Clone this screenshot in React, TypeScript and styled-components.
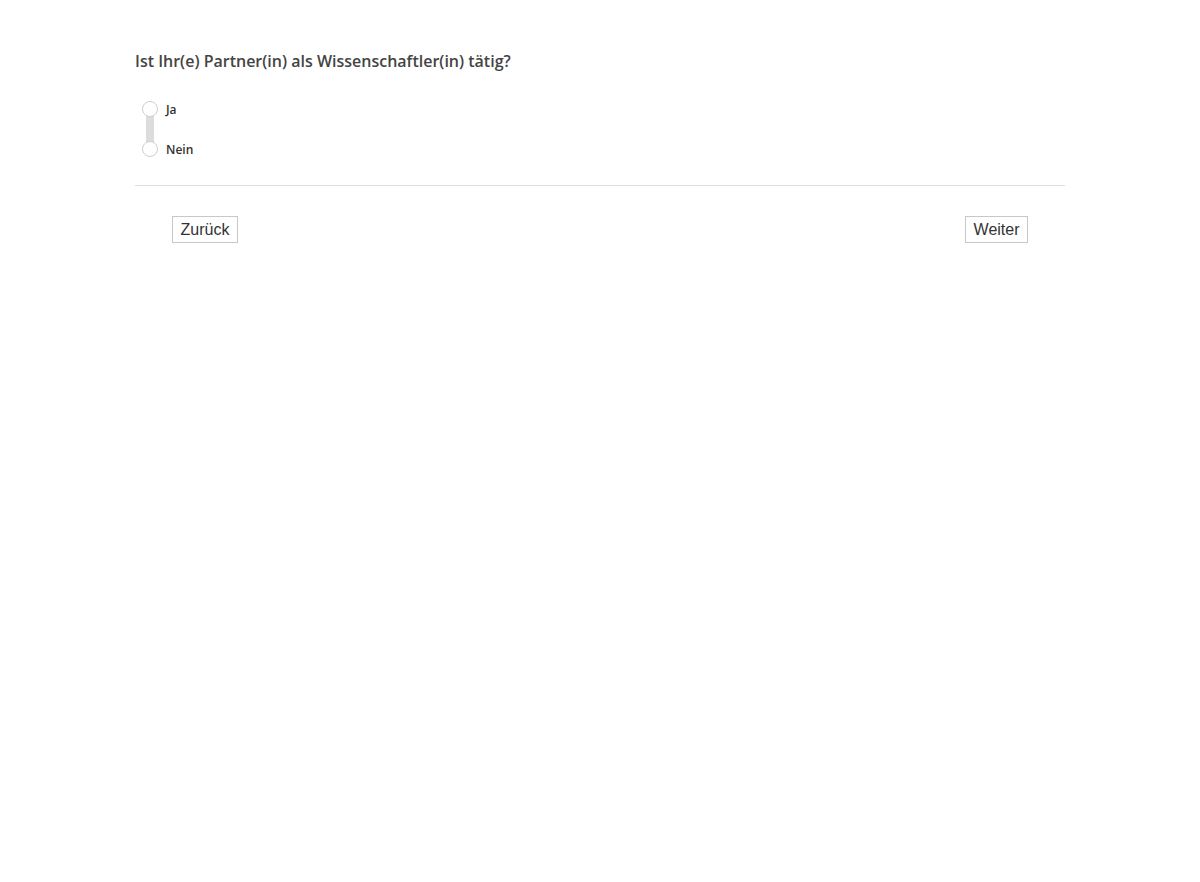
import React from "react";
import styled, { createGlobalStyle } from "styled-components";

const Global = createGlobalStyle`
  html, body { margin: 0; padding: 0; background: #fff; }
  body { font-family: "Open Sans", "Liberation Sans", sans-serif; }
`;

const Page = styled.div`
  width: 930px;
  margin: 0 auto;
  padding-top: 50px;
`;

const Question = styled.h2`
  margin: 0;
  font-family: "Open Sans", sans-serif;
  font-size: 16px;
  line-height: 22px;
  font-weight: 600;
  color: #444;
`;

const Options = styled.div`
  position: relative;
  display: flex;
  flex-direction: column;
  gap: 24px;
  margin-top: 29px;
  padding-left: 7px;
`;

const Track = styled.div`
  position: absolute;
  left: 11px;
  top: 14px;
  width: 8px;
  height: 27px;
  background: #dcdcdc;
`;

const Option = styled.label`
  position: relative;
  display: flex;
  align-items: center;
  gap: 8px;
  height: 16px;
  cursor: pointer;
`;

const Circle = styled.span`
  box-sizing: border-box;
  width: 16px;
  height: 16px;
  border-radius: 50%;
  border: 1px solid #cfcfcf;
  background: #fff;
`;

const Label = styled.span`
  font-family: "Open Sans", sans-serif;
  font-size: 12px;
  font-weight: 600;
  color: #333;
`;

const Divider = styled.hr`
  margin: 28px 0 0;
  border: 0;
  border-top: 1px solid #ddd;
`;

const Nav = styled.div`
  display: flex;
  justify-content: space-between;
  padding: 30px 37px 0;
`;

const NavButton = styled.button`
  box-sizing: border-box;
  height: 27px;
  padding: 0 7.5px;
  background: #fff;
  border: 1px solid #c8c8c8;
  border-radius: 0;
  font-family: "Liberation Sans", Arial, sans-serif;
  font-size: 16px;
  color: #333;
  cursor: pointer;
`;

export default function App() {
  return (
    <>
      <Global />
      <Page>
        <Question>Ist Ihr(e) Partner(in) als Wissenschaftler(in) tätig?</Question>
        <Options>
          <Track />
          <Option>
            <Circle />
            <Label>Ja</Label>
          </Option>
          <Option>
            <Circle />
            <Label>Nein</Label>
          </Option>
        </Options>
        <Divider />
        <Nav>
          <NavButton>Zurück</NavButton>
          <NavButton>Weiter</NavButton>
        </Nav>
      </Page>
    </>
  );
}
